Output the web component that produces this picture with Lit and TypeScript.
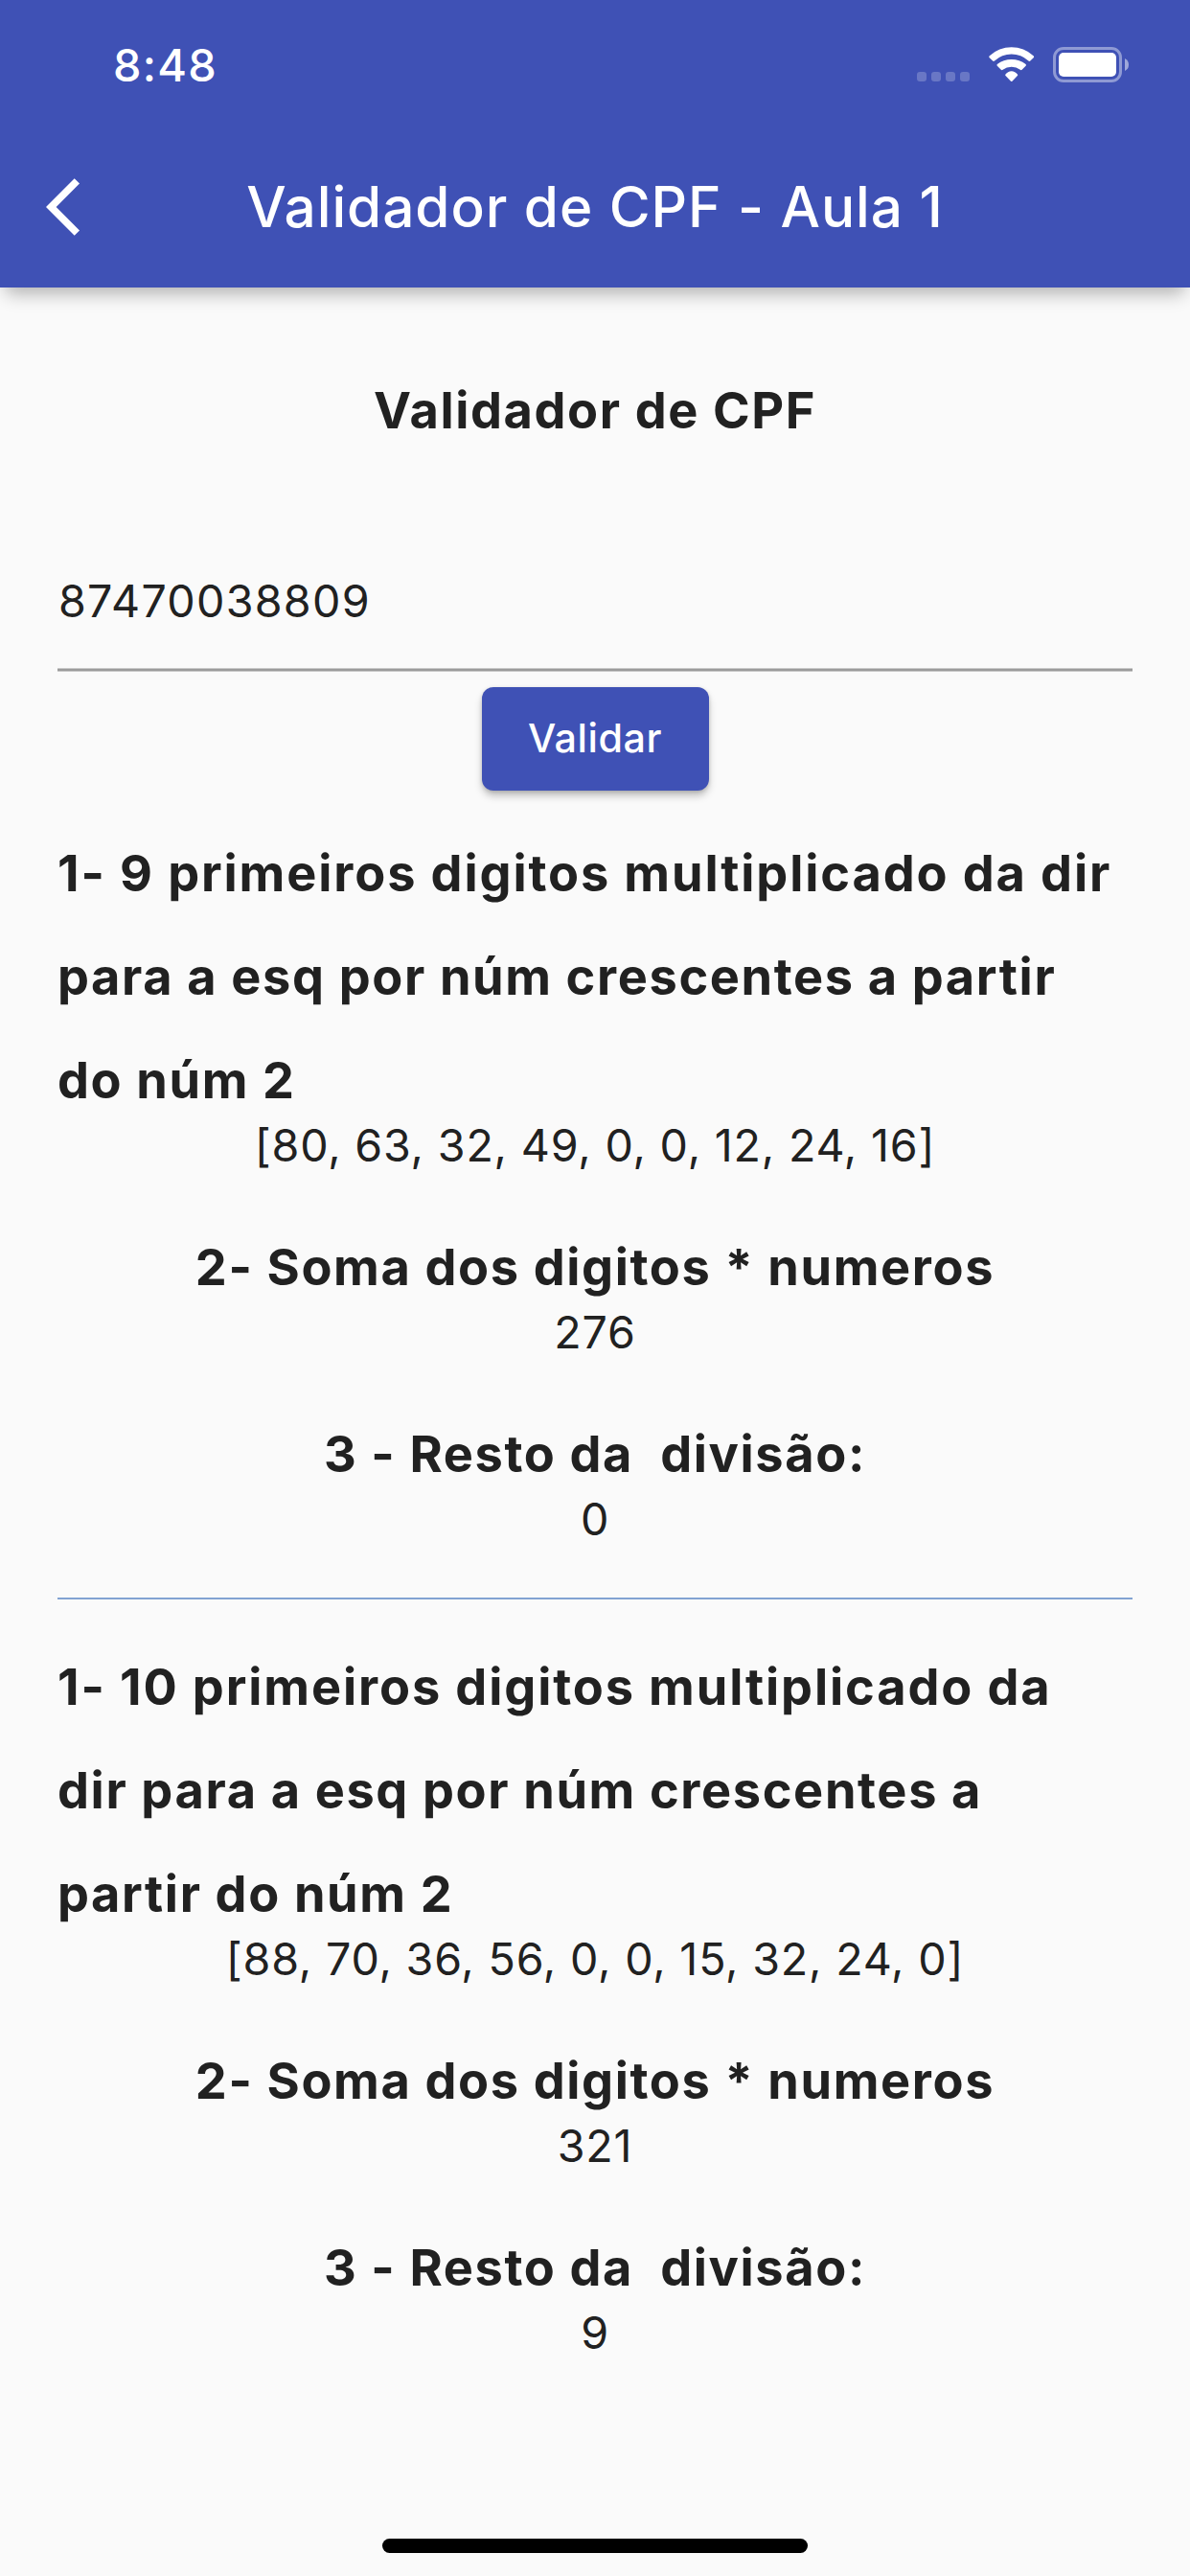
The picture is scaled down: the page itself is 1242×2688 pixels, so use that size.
import { LitElement, html, css } from "lit";
import { customElement, property } from "lit/decorators.js";

interface Step {
  lines: string[];
  value: string;
}

const firstDigit: Step[] = [
  {
    lines: [
      "1- 9 primeiros digitos multiplicado da dir",
      "para a esq por núm crescentes a partir",
      "do núm 2",
    ],
    value: "[80, 63, 32, 49, 0, 0, 12, 24, 16]",
  },
  { lines: ["2- Soma dos digitos * numeros"], value: "276" },
  { lines: ["3 - Resto da  divisão:"], value: "0" },
];

const secondDigit: Step[] = [
  {
    lines: [
      "1- 10 primeiros digitos multiplicado da",
      "dir para a esq por núm crescentes a",
      "partir do núm 2",
    ],
    value: "[88, 70, 36, 56, 0, 0, 15, 32, 24, 0]",
  },
  { lines: ["2- Soma dos digitos * numeros"], value: "321" },
  { lines: ["3 - Resto da  divisão:"], value: "9" },
];

@customElement("status-bar")
export class StatusBar extends LitElement {
  static styles = css`
    :host {
      display: flex;
      box-sizing: border-box;
      height: 132px;
      padding: 40px 64px 0 118px;
      justify-content: space-between;
      align-items: flex-start;
      color: #fff;
    }
    .time {
      font-size: 46.8px;
      font-weight: 500;
      line-height: 56px;
      letter-spacing: 1.3px;
    }
    .icons {
      display: flex;
      padding-top: 9px;
    }
    .cell {
      display: flex;
      gap: 5px;
      padding-top: 26px;
    }
    .dot {
      width: 10px;
      height: 10px;
      border-radius: 3px;
      background: rgba(255, 255, 255, 0.22);
    }
    .wifi {
      margin-left: 19.5px;
      display: block;
    }
    .battery {
      margin-left: 19.5px;
      display: block;
    }
  `;

  render() {
    return html`
      <div class="time">8:48</div>
      <div class="icons">
        <div class="cell">
          <div class="dot"></div>
          <div class="dot"></div>
          <div class="dot"></div>
          <div class="dot"></div>
        </div>
        <svg class="wifi" width="48" height="37" viewBox="0 0 48 37" fill="#fff">
          <path d="M.8 9.2A33.5 33.5 0 0 1 46.6 9.2Q47.6 10.2 46.7 11.2L43.3 14.6Q42.3 15.3 41.4 14.6A25.5 25.5 0 0 0 6 14.6Q5 15.3 4.1 14.6L.7 11.2Q-.2 10.2 .8 9.2Z" />
          <path d="M8.8 18.1A24.5 24.5 0 0 1 38.6 18.1Q39.4 19 38.6 19.8L34.6 23.8Q33.7 24.5 32.8 23.8A14.9 14.9 0 0 0 14.6 23.8Q13.7 24.5 12.8 23.8L8.8 19.8Q8 19 8.8 18.1Z" />
          <path d="M17.5 28.5A7.6 7.6 0 0 1 29.9 28.5Q30.7 29.3 29.9 30.1L24.4 35.7Q23.7 36.3 23 35.7L17.5 30.1Q16.7 29.3 17.5 28.5Z" />
        </svg>
        <svg class="battery" width="79" height="37" viewBox="0 0 79 37">
          <rect x="1.5" y="1.5" width="69" height="34" rx="9.5" fill="none" stroke="#fff" stroke-opacity=".42" stroke-width="3" />
          <rect x="6" y="6" width="60" height="25" rx="5" fill="#fff" />
          <path d="M75 12Q79 14 79 18.5T75 25Z" fill="#fff" fill-opacity=".5" />
        </svg>
      </div>
    `;
  }
}

@customElement("result-step")
export class ResultStep extends LitElement {
  @property({ attribute: false }) step!: Step;

  static styles = css`
    :host {
      display: flex;
      flex-direction: column;
      align-items: center;
      padding-bottom: 59px;
      white-space: pre;
    }
    .heading {
      font-size: 52.3px;
      font-weight: 700;
      line-height: 108px;
      letter-spacing: 1.63px;
    }
    .heading.multi {
      align-self: stretch;
    }
    .multi .line:first-child {
      letter-spacing: 1.88px;
    }
    .line {
      display: block;
    }
    .value {
      font-size: 46.6px;
      font-weight: 400;
      line-height: 28px;
      letter-spacing: 0.82px;
    }
  `;

  render() {
    const { lines, value } = this.step;
    return html`
      <div class="heading ${lines.length > 1 ? "multi" : ""}">${lines.map((l) => html`<span class="line">${l}</span>`)}</div>
      <div class="value">${value}</div>
    `;
  }
}

@customElement("app-root")
export class AppRoot extends LitElement {
  static styles = css`
    :host {
      display: flex;
      flex-direction: column;
      box-sizing: border-box;
      width: 1242px;
      height: 2688px;
      background: #fafafa;
      color: #212121;
      font-family: Inter, "Liberation Sans", sans-serif;
      overflow: hidden;
    }
    .app-bar {
      height: 300px;
      background: #3f51b5;
      box-shadow: 0 12px 18px -6px rgba(0, 0, 0, 0.3);
      color: #fff;
    }
    .toolbar {
      display: grid;
      grid-template-columns: 1fr auto 1fr;
      align-items: center;
      height: 168px;
      padding: 0 48px;
    }
    .back {
      display: block;
    }
    .title {
      font-size: 58.5px;
      font-weight: 500;
      line-height: 60px;
      letter-spacing: 0.94px;
    }
    .body {
      flex: 1;
      display: flex;
      flex-direction: column;
      padding: 74px 60px 0;
    }
    .page-heading {
      text-align: center;
      font-size: 52.3px;
      font-weight: 700;
      line-height: 108px;
      letter-spacing: 1.6px;
    }
    .field {
      height: 98px;
      margin-top: 117px;
      font-size: 46.6px;
      line-height: 56px;
      letter-spacing: 1.28px;
      padding-left: 1px;
    }
    .underline {
      height: 2px;
      background: #9b9b9b;
      border-top: 1px solid #c8c8c8;
      border-bottom: 1px solid #c8c8c8;
    }
    .button {
      align-self: center;
      box-sizing: border-box;
      width: 237px;
      height: 108px;
      margin: 16px 0 32px;
      padding: 0 0 2px;
      border: 0;
      border-radius: 12px;
      background: #3f51b5;
      box-shadow: 0 6px 8px -1px rgba(0, 0, 0, 0.25), 0 1px 4px rgba(0, 0, 0, 0.14);
      color: #fff;
      font: 500 41.3px/50px Inter, "Liberation Sans", sans-serif;
      letter-spacing: 0.55px;
    }
    .divider {
      height: 2px;
      margin: 9px 0 37px;
      background: #82a3d2;
    }
    .home {
      align-self: center;
      width: 444px;
      height: 15px;
      margin-bottom: 24px;
      border-radius: 8px;
      background: #000;
    }
  `;

  render() {
    return html`
      <header class="app-bar">
        <status-bar></status-bar>
        <div class="toolbar">
          <svg class="back" width="36" height="72" viewBox="0 0 12 24" fill="#fff">
            <path d="M11.67 3.87L9.9 2.1 0 12l9.9 9.9 1.77-1.77L3.54 12z" />
          </svg>
          <div class="title">Validador de CPF - Aula 1</div>
        </div>
      </header>
      <main class="body">
        <div class="page-heading">Validador de CPF</div>
        <div class="field">87470038809</div>
        <div class="underline"></div>
        <button class="button">Validar</button>
        ${firstDigit.map((s) => html`<result-step .step=${s}></result-step>`)}
        <div class="divider"></div>
        ${secondDigit.map((s) => html`<result-step .step=${s}></result-step>`)}
      </main>
      <div class="home"></div>
    `;
  }
}
